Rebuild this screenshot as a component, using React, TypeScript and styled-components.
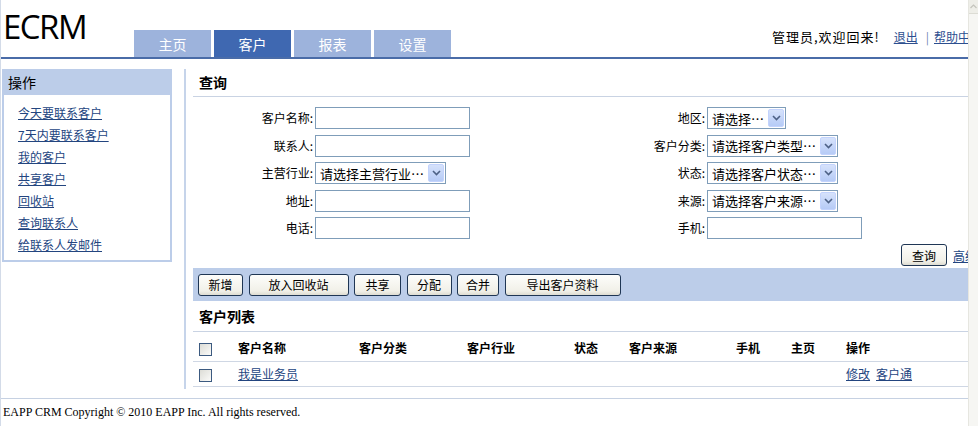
import React from 'react'
import styled, { createGlobalStyle } from 'styled-components'

const GlobalStyle = createGlobalStyle`
  html, body {
    margin: 0;
    padding: 0;
    background: #fff;
  }
  body {
    font-family: "Liberation Sans", "Noto Sans CJK SC", sans-serif;
    font-size: 12px;
    color: #000;
  }
`;

const cjk = `"Noto Sans CJK SC", "Liberation Sans", sans-serif`;

const Window = styled.div`
  display: flex;
  width: 978px;
  height: 426px;
  overflow: hidden;
`;

const Viewport = styled.div`
  width: 968px;
  height: 426px;
  overflow: hidden;
  border-left: 1px solid #d3dbe8;
  box-sizing: border-box;
`;

const Page = styled.div`
  width: 1000px;
  font-family: ${cjk};
`;

const Scrollbar = styled.div`
  width: 10px;
  height: 426px;
  background: #f6f6f3;
  border-left: 1px solid #e6e6e0;
  box-sizing: border-box;
`;

const ScrollButton = styled.div`
  height: 13px;
  background: #eeeee8;
  border-bottom: 1px solid #dcdcd4;
  display: flex;
  align-items: center;
  justify-content: center;
`;

/* header */

const Header = styled.div`
  display: flex;
  align-items: flex-end;
  height: 57px;
  border-bottom: 2px solid #4a6ca8;
  padding-right: 19px;
`;

const Logo = styled.div`
  align-self: flex-start;
  width: 131px;
  padding: 9.5px 0 0 2px;
  font-family: "Open Sans", "Liberation Sans", sans-serif;
  font-size: 33px;
  line-height: 33px;
  letter-spacing: -1.5px;
  color: #000;
`;

const Tabs = styled.div`
  display: flex;
  gap: 3px;
`;

const Tab = styled.div<{ $active?: boolean }>`
  width: 77px;
  height: 27px;
  display: flex;
  align-items: center;
  justify-content: center;
  font-size: 14px;
  color: #fff;
  background: ${(p) => (p.$active ? '#3f68b1' : '#9db3dc')};
`;

const UserBar = styled.div`
  margin-left: auto;
  align-self: center;
  margin-top: 15px;
  display: flex;
  align-items: center;
  font-size: 13px;
  white-space: nowrap;
`;

const Welcome = styled.span`
  margin-right: 14px;
  letter-spacing: 1px;
`;

const TopLink = styled.a`
  color: #2d4f8f;
  text-decoration: underline;
  font-size: 12px;
`;

const Divider = styled.span`
  color: #6f86b0;
  font-size: 12px;
  margin: 0 5px 0 8px;
`;

/* body */

const Body = styled.div`
  display: flex;
  align-items: flex-start;
  margin-top: 10px;
`;

const Sidebar = styled.div`
  width: 170px;
  margin-left: 1px;
  margin-right: 12px;
  border: 2px solid #bccde9;
  box-sizing: border-box;
  padding-bottom: 4px;
`;

const SideHead = styled.div`
  background: #bccde9;
  height: 24px;
  line-height: 22px;
  padding-left: 4px;
  font-size: 14px;
`;

const SideList = styled.ul`
  list-style: none;
  margin: 0;
  padding: 7px 0 0 14px;
`;

const SideItem = styled.li`
  height: 22px;
  line-height: 22px;
`;

const SideLink = styled.a`
  color: #23457f;
  text-decoration: underline;
  font-size: 12px;
`;

const Main = styled.div`
  flex: 1;
  border-left: 2px solid #c6d4ea;
  padding-left: 7px;
  padding-bottom: 2px;
`;

const SectionTitle = styled.div<{ $h?: number }>`
  height: ${(p) => p.$h ?? 27}px;
  line-height: ${(p) => p.$h ?? 27}px;
  border-bottom: 1px solid #c9d3e3;
  padding-left: 6px;
  font-size: 14px;
  font-weight: bold;
`;

const Form = styled.div`
  display: grid;
  grid-template-columns: 122px 280px 112px 1fr;
  row-gap: 5.5px;
  padding-top: 10px;
`;

const Label = styled.div`
  text-align: right;
  line-height: 22px;
  padding-right: 2px;
  font-size: 12px;
`;

const Field = styled.div`
  display: flex;
  align-items: center;
  height: 22px;
`;

const TextInput = styled.div`
  width: 155px;
  height: 22px;
  border: 1px solid #7f9db9;
  box-sizing: border-box;
  background: #fff;
`;

const Select = styled.div<{ $w: number }>`
  width: ${(p) => p.$w}px;
  height: 22px;
  border: 1px solid #7f9db9;
  box-sizing: border-box;
  background: #fff;
  display: flex;
  align-items: center;
  padding: 1px;
`;

const SelectText = styled.span`
  flex: 1;
  padding-left: 3px;
  font-family: "Noto Sans CJK SC", sans-serif;
  font-size: 13px;
  white-space: nowrap;
  overflow: hidden;
`;

const DropButton = styled.span`
  width: 16px;
  height: 18px;
  display: flex;
  align-items: center;
  justify-content: center;
  border-radius: 2px;
  background: linear-gradient(#d6e2fb, #b6cbf6);
  border: 1px solid #c3d3fd;
  box-sizing: border-box;
`;

const QueryRow = styled.div`
  display: flex;
  justify-content: flex-end;
  align-items: center;
  gap: 6px;
  margin-top: 5px;
  margin-bottom: 2px;
`;

const Button = styled.button<{ $w?: number }>`
  width: ${(p) => (p.$w ? `${p.$w}px` : 'auto')};
  height: 22px;
  padding: 0;
  font-family: ${cjk};
  font-size: 12px;
  color: #000;
  border: 1px solid #1f3654;
  border-radius: 3px;
  background: linear-gradient(#fdfdfb, #f1f0e8 80%, #dedcd2);
  cursor: pointer;
`;

const TextLink = styled.a`
  color: #23457f;
  text-decoration: underline;
  font-size: 12px;
  white-space: nowrap;
`;

const Toolbar = styled.div`
  display: flex;
  align-items: center;
  gap: 5.5px;
  height: 33px;
  padding-left: 5px;
  background: #bccde9;
`;

const Table = styled.table`
  width: 100%;
  border-collapse: collapse;
  table-layout: fixed;
`;

const Th = styled.th<{ $w?: number }>`
  box-sizing: border-box;
  width: ${(p) => (p.$w ? `${p.$w}px` : 'auto')};
  height: 29px;
  padding: 3px 0 0 6px;
  text-align: left;
  font-size: 12px;
  font-weight: bold;
  border-bottom: 1px solid #cfd7e4;
  white-space: nowrap;
`;

const Td = styled.td`
  box-sizing: border-box;
  height: 25px;
  padding: 0 0 0 6px;
  font-size: 12px;
  border-bottom: 1px solid #cfd7e4;
  white-space: nowrap;
`;

const Check = styled.span`
  display: inline-block;
  width: 13px;
  height: 13px;
  border: 1px solid #3c5a80;
  box-sizing: border-box;
  background: linear-gradient(135deg, #dcdcd6, #fbfbf9);
  vertical-align: middle;
`;

const ActionLink = styled(TextLink)`
  margin-right: 6px;
`;

const Footer = styled.div`
  margin-top: 9px;
  border-top: 1px solid #c6d1e2;
  padding: 5px 0 0 2px;
  font-family: "Liberation Serif", serif;
  font-size: 12px;
  line-height: 16px;
`;

const Chevron = () => (
  <svg width="9" height="6" viewBox="0 0 9 6">
    <path d="M1 1 L4.5 4.5 L8 1" fill="none" stroke="#4d6185" strokeWidth="1.6" />
  </svg>
);

const Dropdown = ({ text, w }: { text: string; w: number }) => (
  <Select $w={w}>
    <SelectText>{text}</SelectText>
    <DropButton>
      <Chevron />
    </DropButton>
  </Select>
);

const sideLinks = [
  '今天要联系客户',
  '7天内要联系客户',
  '我的客户',
  '共享客户',
  '回收站',
  '查询联系人',
  '给联系人发邮件',
];

const toolButtons: [string, number][] = [
  ['新增', 45],
  ['放入回收站', 100],
  ['共享', 47],
  ['分配', 45],
  ['合并', 42],
  ['导出客户资料', 116],
];

const columns: [string, number | undefined][] = [
  ['', 39],
  ['客户名称', 121],
  ['客户分类', 108],
  ['客户行业', 107],
  ['状态', 55],
  ['客户来源', 107],
  ['手机', 55],
  ['主页', 55],
  ['操作', undefined],
];

export default function App() {
  return (
    <>
      <GlobalStyle />
      <Window>
        <Viewport>
          <Page>
            <Header>
              <Logo>ECRM</Logo>
              <Tabs>
                <Tab>主页</Tab>
                <Tab $active>客户</Tab>
                <Tab>报表</Tab>
                <Tab>设置</Tab>
              </Tabs>
              <UserBar>
                <Welcome>管理员,欢迎回来!</Welcome>
                <TopLink href="#">退出</TopLink>
                <Divider>|</Divider>
                <TopLink href="#">帮助中心</TopLink>
              </UserBar>
            </Header>

            <Body>
              <Sidebar>
                <SideHead>操作</SideHead>
                <SideList>
                  {sideLinks.map((s) => (
                    <SideItem key={s}>
                      <SideLink href="#">{s}</SideLink>
                    </SideItem>
                  ))}
                </SideList>
              </Sidebar>

              <Main>
                <SectionTitle>查询</SectionTitle>
                <Form>
                  <Label>客户名称:</Label>
                  <Field><TextInput /></Field>
                  <Label>地区:</Label>
                  <Field><Dropdown text="请选择…" w={79} /></Field>

                  <Label>联系人:</Label>
                  <Field><TextInput /></Field>
                  <Label>客户分类:</Label>
                  <Field><Dropdown text="请选择客户类型…" w={131} /></Field>

                  <Label>主营行业:</Label>
                  <Field><Dropdown text="请选择主营行业…" w={131} /></Field>
                  <Label>状态:</Label>
                  <Field><Dropdown text="请选择客户状态…" w={131} /></Field>

                  <Label>地址:</Label>
                  <Field><TextInput /></Field>
                  <Label>来源:</Label>
                  <Field><Dropdown text="请选择客户来源…" w={131} /></Field>

                  <Label>电话:</Label>
                  <Field><TextInput /></Field>
                  <Label>手机:</Label>
                  <Field><TextInput /></Field>
                </Form>

                <QueryRow>
                  <Button $w={46}>查询</Button>
                  <TextLink href="#">高级查询</TextLink>
                </QueryRow>

                <Toolbar>
                  {toolButtons.map(([t, w]) => (
                    <Button key={t} $w={w}>{t}</Button>
                  ))}
                </Toolbar>

                <SectionTitle $h={30}>客户列表</SectionTitle>

                <Table>
                  <thead>
                    <tr>
                      {columns.map(([c, w], i) => (
                        <Th key={i} $w={w}>{i === 0 ? <Check /> : c}</Th>
                      ))}
                    </tr>
                  </thead>
                  <tbody>
                    <tr>
                      <Td><Check /></Td>
                      <Td><TextLink href="#">我是业务员</TextLink></Td>
                      <Td />
                      <Td />
                      <Td />
                      <Td />
                      <Td />
                      <Td />
                      <Td>
                        <ActionLink href="#">修改</ActionLink>
                        <TextLink href="#">客户通</TextLink>
                      </Td>
                    </tr>
                  </tbody>
                </Table>
              </Main>
            </Body>

            <Footer>EAPP CRM Copyright © 2010 EAPP Inc. All rights reserved.</Footer>
          </Page>
        </Viewport>
        <Scrollbar>
          <ScrollButton>
            <svg width="7" height="5" viewBox="0 0 7 5">
              <path d="M0.5 4 L3.5 1 L6.5 4" fill="none" stroke="#c4c4bc" strokeWidth="1.2" />
            </svg>
          </ScrollButton>
        </Scrollbar>
      </Window>
    </>
  );
}
